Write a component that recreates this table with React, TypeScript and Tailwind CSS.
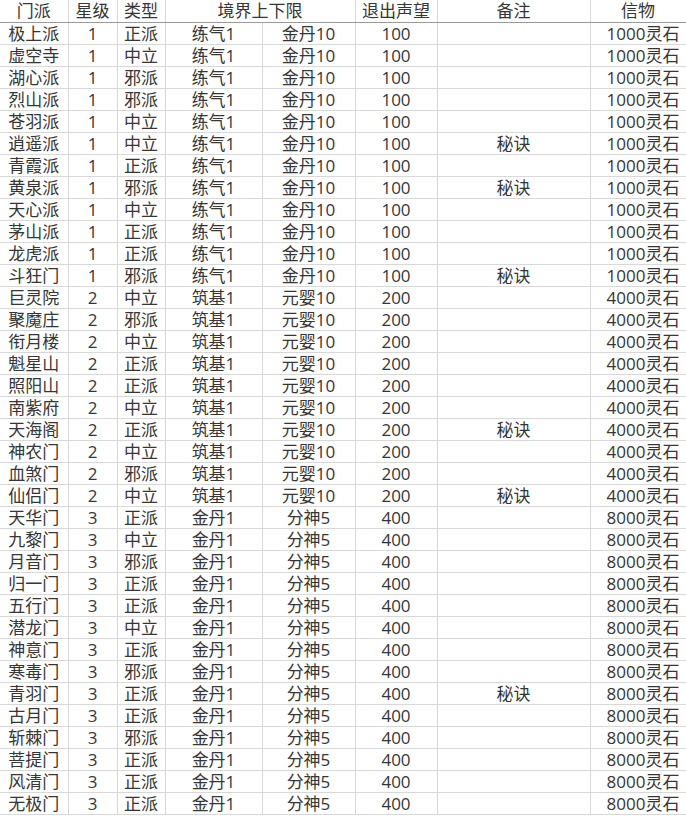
import React from "react";

type Row = [string, string, string, string];

const rows: Row[] = [
  ["极上派", "1", "正派", ""],
  ["虚空寺", "1", "中立", ""],
  ["湖心派", "1", "邪派", ""],
  ["烈山派", "1", "邪派", ""],
  ["苍羽派", "1", "中立", ""],
  ["逍遥派", "1", "中立", "秘诀"],
  ["青霞派", "1", "正派", ""],
  ["黄泉派", "1", "邪派", "秘诀"],
  ["天心派", "1", "中立", ""],
  ["茅山派", "1", "正派", ""],
  ["龙虎派", "1", "正派", ""],
  ["斗狂门", "1", "邪派", "秘诀"],
  ["巨灵院", "2", "中立", ""],
  ["聚魔庄", "2", "邪派", ""],
  ["衔月楼", "2", "中立", ""],
  ["魁星山", "2", "正派", ""],
  ["照阳山", "2", "正派", ""],
  ["南紫府", "2", "中立", ""],
  ["天海阁", "2", "正派", "秘诀"],
  ["神农门", "2", "中立", ""],
  ["血煞门", "2", "邪派", ""],
  ["仙侣门", "2", "中立", "秘诀"],
  ["天华门", "3", "正派", ""],
  ["九黎门", "3", "中立", ""],
  ["月音门", "3", "邪派", ""],
  ["归一门", "3", "正派", ""],
  ["五行门", "3", "正派", ""],
  ["潜龙门", "3", "中立", ""],
  ["神意门", "3", "正派", ""],
  ["寒毒门", "3", "邪派", ""],
  ["青羽门", "3", "正派", "秘诀"],
  ["古月门", "3", "正派", ""],
  ["斩棘门", "3", "邪派", ""],
  ["菩提门", "3", "正派", ""],
  ["风清门", "3", "正派", ""],
  ["无极门", "3", "正派", ""],
];

const tiers: Record<string, [string, string, string, string]> = {
  "1": ["练气1", "金丹10", "100", "1000灵石"],
  "2": ["筑基1", "元婴10", "200", "4000灵石"],
  "3": ["金丹1", "分神5", "400", "8000灵石"],
};

const cell = "h-[22px] p-0 border-b border-r border-[#d8d8d8] text-center leading-[21px] whitespace-nowrap overflow-hidden";
const head = "h-[22px] p-0 border-b border-r border-b-[#9a9a9a] border-r-[#d8d8d8] text-center leading-[21px] whitespace-nowrap font-normal";

export default function App() {
  return (
    <div
      className="w-[686px] h-[818px] bg-white text-[#363636] text-[17px] overflow-hidden"
      style={{ fontFamily: '"Open Sans", "Noto Sans CJK SC", sans-serif' }}
    >
      <table className="table-fixed border-collapse w-[686px]">
        <colgroup>
          <col className="w-[68px]" />
          <col className="w-[49px]" />
          <col className="w-[48px]" />
          <col className="w-[97px]" />
          <col className="w-[93px]" />
          <col className="w-[82px]" />
          <col className="w-[153px]" />
          <col className="w-[96px]" />
        </colgroup>
        <thead>
          <tr>
            <th className={head}>门派</th>
            <th className={head}>星级</th>
            <th className={head}>类型</th>
            <th className={head} colSpan={2}>境界上下限</th>
            <th className={head}>退出声望</th>
            <th className={head}>备注</th>
            <th className={head}>信物</th>
          </tr>
        </thead>
        <tbody>
          {rows.map(([name, star, type, note]) => {
            const [lo, hi, rep, token] = tiers[star];
            return (
              <tr key={name}>
                <td className={cell}>{name}</td>
                <td className={cell}>{star}</td>
                <td className={cell}>{type}</td>
                <td className={cell}>{lo}</td>
                <td className={cell}>{hi}</td>
                <td className={cell}>{rep}</td>
                <td className={cell}>{note}</td>
                <td className={`${cell} !text-right pr-[6px]`}>{token}</td>
              </tr>
            );
          })}
        </tbody>
      </table>
    </div>
  );
}
